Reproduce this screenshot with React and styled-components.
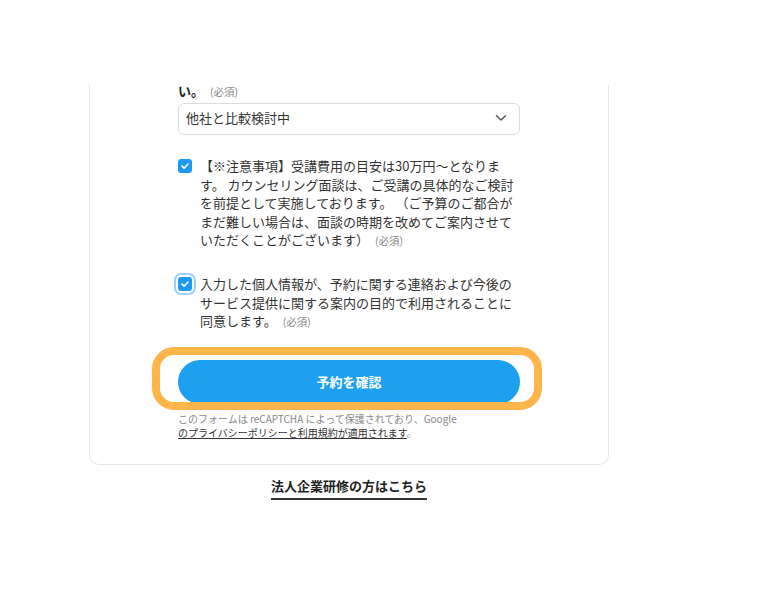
import React from "react";
import styled, { createGlobalStyle } from "styled-components";

const Global = createGlobalStyle`
  html, body { margin: 0; padding: 0; background: #fff; }
  body { font-family: "Noto Sans CJK JP", "Noto Sans", sans-serif; color: #333; }
`;

const Page = styled.div`
  width: 778px;
  height: 602px;
  padding-top: 85px;
  box-sizing: border-box;
  overflow: hidden;
`;

const Card = styled.div`
  margin-left: 89px;
  width: 520px;
  box-sizing: border-box;
  border: 1px solid #e6e6e6;
  border-top: none;
  border-radius: 0 0 10px 10px;
  padding: 0 88px 24px 88px;
  display: flex;
  flex-direction: column;
`;

const Label = styled.div`
  font-size: 13px;
  font-weight: 700;
  line-height: 12px;
  height: 12px;
  color: #222;
`;

const Req = styled.span`
  display: inline-block;
  font-size: 10.5px;
  font-weight: 400;
  line-height: 1;
  color: #888;
  margin-left: 6px;
`;

const SelectBox = styled.div`
  margin-top: 6px;
  height: 32px;
  box-sizing: border-box;
  border: 1px solid #dcdcdc;
  border-radius: 6px;
  display: flex;
  align-items: center;
  justify-content: space-between;
  padding: 0 12px 3px 7px;
  font-size: 13px;
  line-height: 1;
  color: #333;
`;

const CheckRow = styled.div`
  display: flex;
  align-items: flex-start;
  gap: 8px;
  margin-top: ${(p) => p.$mt}px;
  padding-right: 6px;
`;

const Box = styled.div`
  flex: none;
  width: 14px;
  height: 14px;
  margin-top: 2px;
  border-radius: 3px;
  background: #1e9bf0;
  display: flex;
  align-items: center;
  justify-content: center;
  box-shadow: ${(p) => (p.$focus ? "0 0 0 2px #fff, 0 0 0 4px #9fd0f7" : "none")};
`;

const CheckText = styled.div`
  font-size: 13px;
  line-height: 18.6px;
  color: #333;
`;

const ButtonWrap = styled.div`
  position: relative;
  margin-top: 29px;
`;

const Button = styled.button`
  width: 100%;
  height: 44px;
  border: none;
  border-radius: 22px;
  background: #1ea0f1;
  color: #fff;
  font-family: inherit;
  font-size: 13px;
  font-weight: 700;
  display: block;
`;

const Highlight = styled.div`
  position: absolute;
  left: -26px;
  top: -13px;
  width: 390px;
  height: 63px;
  box-sizing: border-box;
  border: 8px solid #ffb54a;
  border-radius: 22px;
  pointer-events: none;
`;

const Notice = styled.div`
  margin-top: 8px;
  font-size: 10px;
  line-height: 14px;
  color: #888;
`;

const NoticeLink = styled.span`
  color: #333;
  text-decoration: underline;
`;

const Footer = styled.div`
  margin-left: 89px;
  width: 520px;
  display: flex;
  justify-content: center;
  padding-top: 11px;
`;

const CorpLink = styled.a`
  font-size: 13px;
  font-weight: 700;
  color: #222;
  line-height: 19px;
  padding-bottom: 3px;
  border-bottom: 2px solid #333;
  text-decoration: none;
`;

const Check = () => (
  <svg width="10" height="10" viewBox="0 0 10 10" fill="none">
    <path d="M2 5.2 L4.1 7.2 L8 3" stroke="#fff" strokeWidth="1.6" strokeLinecap="round" strokeLinejoin="round" />
  </svg>
);

const Chevron = () => (
  <svg width="12" height="8" viewBox="0 0 12 8" fill="none">
    <path d="M1.5 1.8 L6 6 L10.5 1.8" stroke="#555" strokeWidth="1.5" strokeLinecap="round" strokeLinejoin="round" />
  </svg>
);

export default function App() {
  return (
    <>
      <Global />
      <Page>
        <Card>
          <Label>
            い。<Req>(必須)</Req>
          </Label>
          <SelectBox>
            <span>他社と比較検討中</span>
            <Chevron />
          </SelectBox>
          <CheckRow $mt={22}>
            <Box><Check /></Box>
            <CheckText>
              【※注意事項】受講費用の目安は30万円〜となります。 カウンセリング面談は、ご受講の具体的なご検討を前提として実施しております。 （ご予算のご都合がまだ難しい場合は、面談の時期を改めてご案内させていただくことがございます）<Req>(必須)</Req>
            </CheckText>
          </CheckRow>
          <CheckRow $mt={25}>
            <Box $focus><Check /></Box>
            <CheckText>
              入力した個人情報が、予約に関する連絡および今後のサービス提供に関する案内の目的で利用されることに同意します。<Req>(必須)</Req>
            </CheckText>
          </CheckRow>
          <ButtonWrap>
            <Button>予約を確認</Button>
            <Highlight />
          </ButtonWrap>
          <Notice>
            このフォームは reCAPTCHA によって保護されており、Google
            <br />
            <NoticeLink>のプライバシーポリシーと利用規約が適用されます</NoticeLink>。
          </Notice>
        </Card>
        <Footer>
          <CorpLink href="#">法人企業研修の方はこちら</CorpLink>
        </Footer>
      </Page>
    </>
  );
}
